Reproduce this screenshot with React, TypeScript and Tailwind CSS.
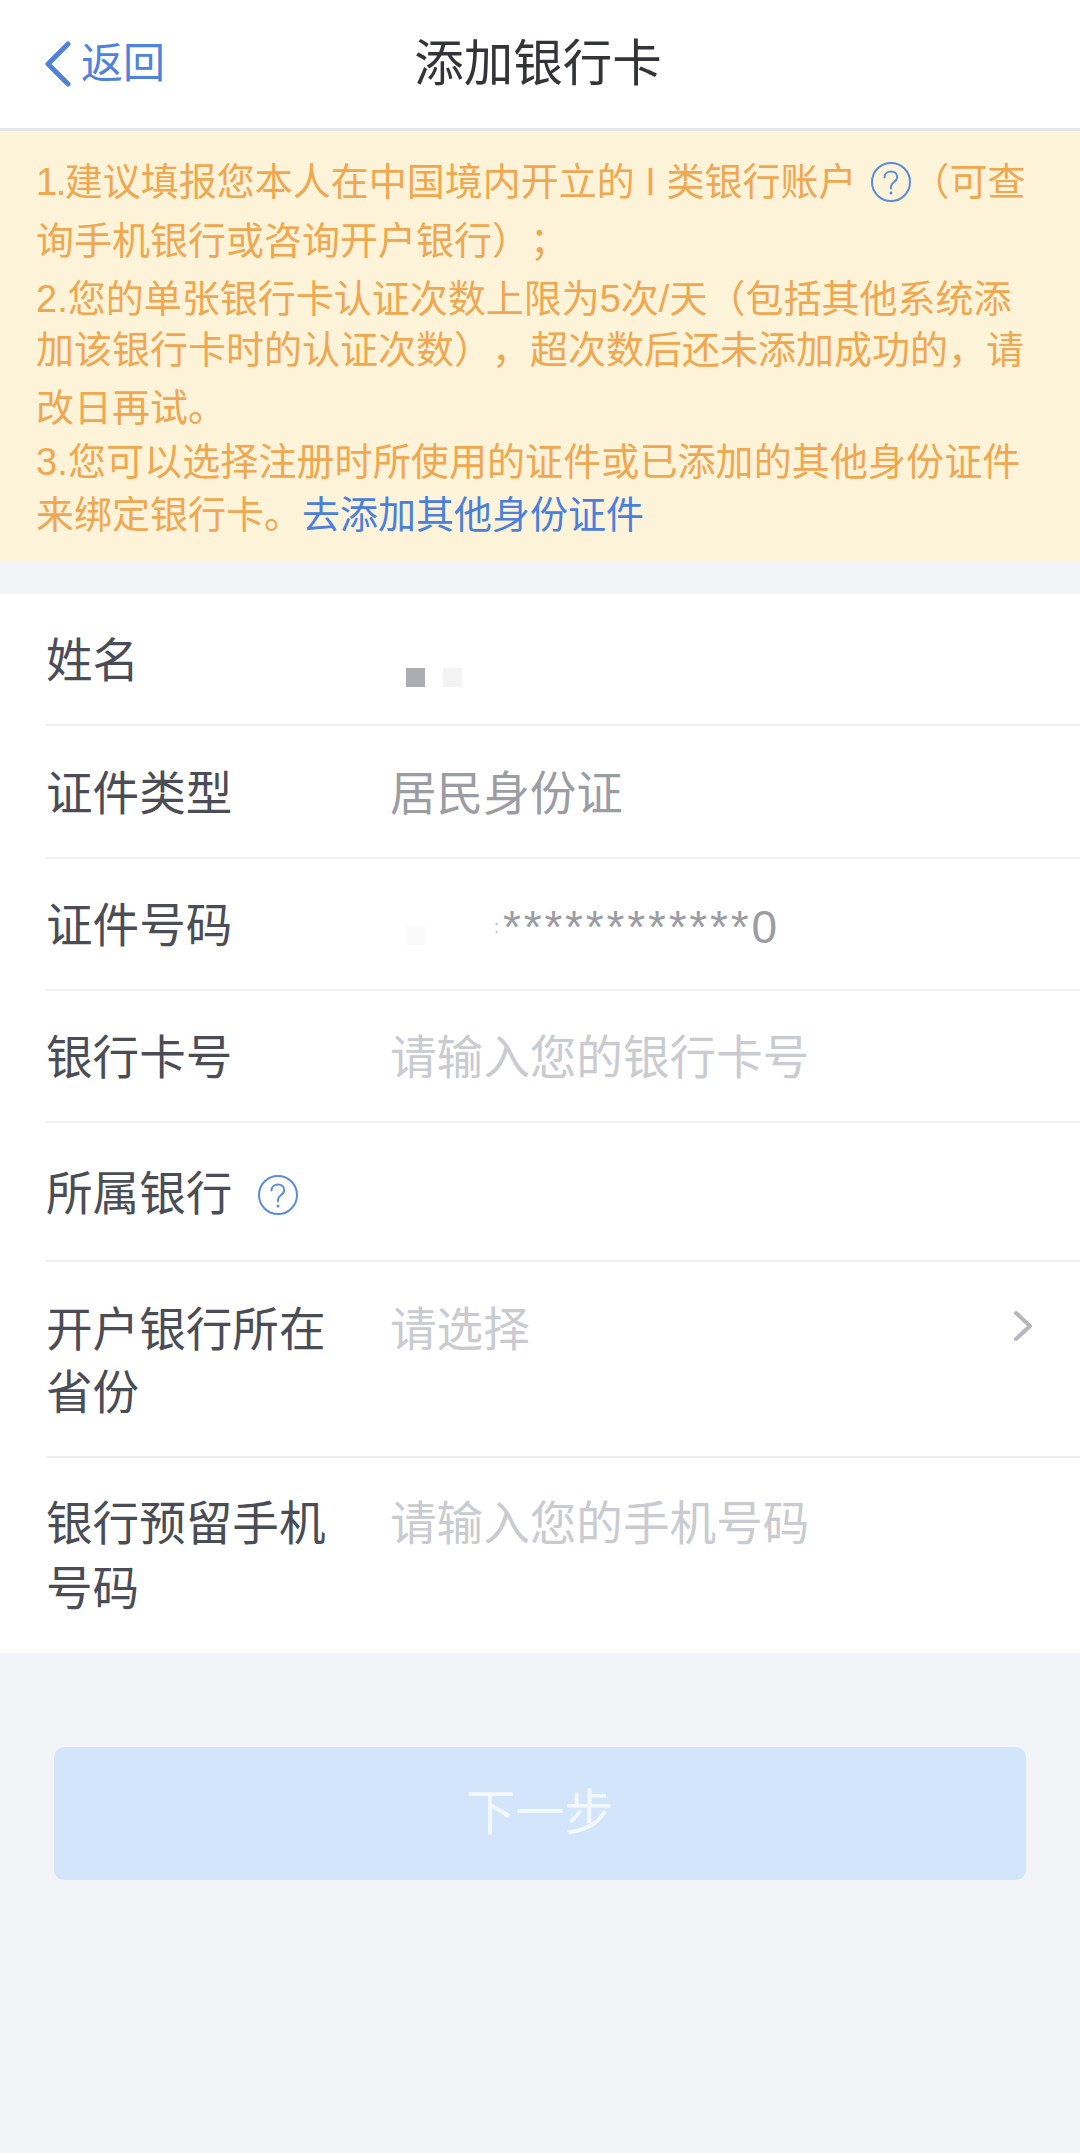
import type { ReactNode } from "react";

function HelpIcon({ className }: { className?: string }) {
  return (
    <svg viewBox="0 0 40 40" fill="none" className={`h-10 w-10 shrink-0 ${className ?? ""}`}>
      <circle cx="20" cy="20" r="19" stroke="#5a8bdc" strokeWidth="2" />
      <path
        d="M13.5 15.5c0-3.6 2.8-6 6.4-6 3.700 0 6.300 2.300 6.300 5.500 0 2.600-1.500 3.900-3.400 5.300-1.900 1.400-2.900 2.500-2.900 4.700v1.500"
        stroke="#5a8bdc"
        strokeWidth="2"
        strokeLinecap="round"
      />
      <circle cx="20" cy="31" r="1.500" fill="#5a8bdc" />
    </svg>
  );
}

function FormRow({
  label,
  className,
  children,
  last,
}: {
  label: string;
  className: string;
  children?: ReactNode;
  last?: boolean;
}) {
  return (
    <div className={`ml-[46px] flex ${last ? "" : "border-b-2 border-[#eeeff1]"} ${className}`}>
      <div className="w-[344px] shrink-0 pr-[58px] text-[#4b4d56]">{label}</div>
      <div className="flex-1">{children}</div>
    </div>
  );
}

export default function App() {
  return (
    <div className="h-[2153px] w-[1080px] overflow-hidden bg-[#f2f4f8] font-['Liberation_Sans','Noto_Sans_CJK_SC',sans-serif] [text-spacing-trim:space-all]">
      <header className="flex h-[131px] items-center border-b-[3px] border-[#e4e6eb] bg-white">
        <div className="flex w-[270px] items-center pl-[45px] text-[42px] leading-none text-[#4f82dc]">
          <svg viewBox="0 0 26 46" fill="none" className="h-[46px] w-[26px]">
            <path d="M23 3 3 23l20 20" stroke="#4f82dc" strokeWidth="5" strokeLinecap="round" strokeLinejoin="round" />
          </svg>
          <span className="ml-[10px]">返回</span>
        </div>
        <h1 className="w-[536px] text-center text-[49.500px] font-normal leading-none text-[#333438]">添加银行卡</h1>
      </header>

      <section className="h-[430px] bg-[#fdf3d9] pl-[36px] pt-[26px] text-[38px] text-[#efa750]">
        <div className="flex h-[50px] items-center whitespace-pre leading-[50px]">
          <span><span className="tracking-[-1.500px]">1.</span>建议填报您本人在中国境内开立的 I 类银行账户</span>
          <HelpIcon className="ml-[15px]" />
          <span>（可查</span>
        </div>
        <div className="mt-[9px] h-[50px] whitespace-pre leading-[50px]">询手机银行或咨询开户银行）；</div>
        <div className="mt-[8px] h-[50px] whitespace-pre leading-[50px]">2.您的单张银行卡认证次数上限为5次/天（包括其他系统添</div>
        <div className="mt-[1px] h-[50px] whitespace-pre leading-[50px]">加该银行卡时的认证次数），超次数后还未添加成功的，请</div>
        <div className="mt-[8px] h-[50px] whitespace-pre leading-[50px]">改日再试。</div>
        <div className="mt-[4px] h-[50px] whitespace-pre leading-[50px] tracking-[0.100px]">3.您可以选择注册时所使用的证件或已添加的其他身份证件</div>
        <div className="mt-[3px] h-[50px] whitespace-pre leading-[50px]">
          来绑定银行卡。<span className="text-[#4a80dc]">去添加其他身份证件</span>
        </div>
      </section>

      <main className="mt-[33px] bg-white text-[46.600px]">
        <FormRow label="姓名" className="h-[132px] items-center pt-[6px]">
          <div className="flex gap-[18px] pl-[16px] pt-[31px]">
            <div className="h-[19px] w-[19px] bg-[#acadb2]" />
            <div className="h-[19px] w-[19px] bg-[#f3f3f4]" />
          </div>
        </FormRow>
        <FormRow label="证件类型" className="h-[133px] items-center pt-[6px]">
          <span className="text-[#9b9da3]">居民身份证</span>
        </FormRow>
        <FormRow label="证件号码" className="h-[132px] items-center pt-[6px]">
          <div className="flex items-center pl-[16px]">
            <div className="mt-[17px] h-[19px] w-[19px] bg-[#fafafa]" />
            <span className="ml-[69px] text-[18px] text-[#b8b9be]">:</span>
            <span className="ml-[4px] whitespace-pre text-[46px] tracking-[2.800px] text-[#9b9da3]">************0</span>
          </div>
        </FormRow>
        <FormRow label="银行卡号" className="h-[132px] items-center pt-[6px]">
          <span className="text-[#cacbd0]">请输入您的银行卡号</span>
        </FormRow>
        <FormRow label="所属银行" className="h-[139px] items-center pt-[6px]">
          <HelpIcon className="-ml-[132px]" />
        </FormRow>
        <FormRow label="开户银行所在省份" className="h-[196px] pt-[37px] leading-[63px]">
          <div className="flex items-start justify-between pr-[47px]">
            <span className="text-[#cacbd0]">请选择</span>
            <svg viewBox="0 0 20 32" fill="none" className="mt-[11px] h-[32px] w-[20px]">
              <path d="M3 3l14 13L3 29" stroke="#b5b7bd" strokeWidth="4" strokeLinecap="round" strokeLinejoin="round" />
            </svg>
          </div>
        </FormRow>
        <FormRow label="银行预留手机号码" last className="h-[195px] pt-[34px] leading-[65px]">
          <span className="text-[#cacbd0]">请输入您的手机号码</span>
        </FormRow>
      </main>

      <button
        type="button"
        className="mx-[54px] mt-[94px] flex h-[133px] w-[972px] items-center justify-center rounded-[10px] bg-[#d3e5fb] text-[49px] text-[#f3f8fe]"
      >
        下一步
      </button>
    </div>
  );
}
